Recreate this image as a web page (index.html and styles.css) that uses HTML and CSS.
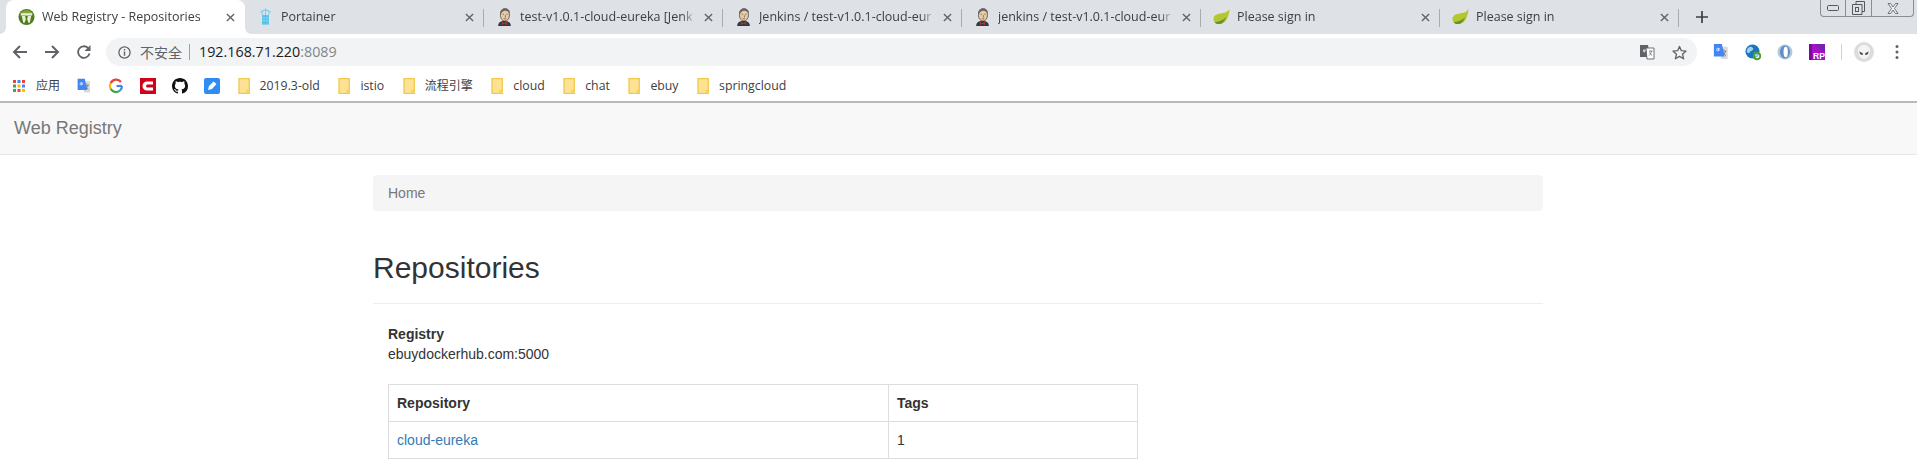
FILE: index.html
```html
<!DOCTYPE html>
<html lang="en">
<head>
<meta charset="UTF-8">
<title>Web Registry - Repositories</title>
<link rel="stylesheet" href="styles.css">
</head>
<body>

<svg class="defs" width="0" height="0">
  <symbol id="close" viewBox="0 0 10 10"><path d="M1 1l8 8M9 1l-8 8" stroke="#5f6368" stroke-width="1.5" fill="none"/></symbol>
  <symbol id="jenkins" viewBox="0 0 18 20">
    <path d="M2 20c0-3.500 2-5.500 7-5.500s7 2 7 5.500z" fill="#2f3a42"/>
    <path d="M4.500 8c0-4.500 2-7 5-7s5 2.500 5 7c0 3.500-2 6.500-5 6.500S4.500 11.500 4.500 8z" fill="#e9c9a6" stroke="#4a403a" stroke-width=".8"/>
    <path d="M4.300 8C3.300 3 6.500.2 9.800.2c3 0 5.700 2.500 5 6.300-1-2.500-2.800-3.500-5-3.500-2.500 0-4.300 2-5.500 5z" fill="#6b6560"/>
    <path d="M7 7h1.500M11 7h1.500M10 8v2.500M8 12h3" stroke="#54453c" stroke-width=".7" fill="none"/>
    <path d="M6 15.500l3 1.300 3-1.300v3.300l-3-1.300-3 1.300z" fill="#b5332a"/>
  </symbol>
  <symbol id="leaf" viewBox="0 0 18 18">
    <path d="M17.500 .5C17 8 14 16.500 6.500 16.500c-3.500 0-6-2.300-6-5.300C.5 5.500 7.500 5.500 12 4.500c2.300-.5 4.300-2 5.500-4z" fill="#b5c72f"/>
    <path d="M1.500 14.500C6 14 10.500 12.500 14 9c-1.500 4-4 7.500-7.500 7.500-2.200 0-3.800-.7-5-2z" fill="#62962c"/>
  </symbol>
  <symbol id="folder" viewBox="0 0 12 16">
    <path d="M1 .7h10.300v14.600H1z" fill="#fde293" stroke="#f2c94c" stroke-width="1.300"/>
    <path d="M9 15v-2.500h2" fill="none" stroke="#f2c94c"/>
  </symbol>
  <symbol id="translate" viewBox="0 0 18 20">
    <path d="M7 4h9.500v14H9z" fill="#d9d9d9"/>
    <path d="M12 7v1M10 9h5M14 9c-.5 2-2 4-3.500 5M11 10c.5 1.500 2 3 3.500 4" stroke="#666" stroke-width=".9" fill="none"/>
    <path d="M1 1h9l3 14H1z" fill="#4285f4"/>
    <path d="M8 6.500H6v1.300h1c-.2.800-1 1-1.500.9C4.500 8.600 4 8 4 7.200S4.700 5.700 5.500 5.800c.5 0 .8.200 1 .4" stroke="#fff" stroke-width=".9" fill="none"/>
  </symbol>
</svg>

<div class="tabstrip">
  <div class="tab active">
    <svg class="favicon" viewBox="0 0 18 18">
      <circle cx="9" cy="9" r="8.500" fill="#4e7d1c"/>
      <path d="M2 6a8 8 0 0 1 14 0z" fill="#84a83c"/>
      <path d="M3 5h12v2.500H3z" fill="#e9efd8"/>
      <path d="M4 8h3.500l.8 3.500L7 15H5.500zM14 8h-3.500l-.8 3.500L11 15h1.500z" fill="#e9efd8"/>
    </svg>
    <span class="tab-title">Web Registry - Repositories</span>
    <svg class="tab-close"><use href="#close"/></svg>
  </div>
  <div class="tab">
    <svg class="favicon" viewBox="0 0 18 18">
      <path d="M5.500 7h7v10h-7z" fill="#3bbced"/>
      <path d="M9 0v7M3.500 4L9 1l5.500 3M5.500 7V4M12.500 7V4" stroke="#6fd0f0" stroke-width="1.100" fill="none"/>
      <path d="M7.500 7v10M10.500 7v10M5.500 10h7M5.500 13h7" stroke="#a5e3f7" stroke-width=".6"/>
    </svg>
    <span class="tab-title">Portainer</span>
    <svg class="tab-close"><use href="#close"/></svg>
  </div>
  <div class="tab">
    <svg class="favicon"><use href="#jenkins"/></svg>
    <span class="tab-title">test-v1.0.1-cloud-eureka [Jenk</span>
    <svg class="tab-close"><use href="#close"/></svg>
  </div>
  <div class="tab">
    <svg class="favicon"><use href="#jenkins"/></svg>
    <span class="tab-title">Jenkins / test-v1.0.1-cloud-eur</span>
    <svg class="tab-close"><use href="#close"/></svg>
  </div>
  <div class="tab">
    <svg class="favicon"><use href="#jenkins"/></svg>
    <span class="tab-title">jenkins / test-v1.0.1-cloud-eur</span>
    <svg class="tab-close"><use href="#close"/></svg>
  </div>
  <div class="tab">
    <svg class="favicon"><use href="#leaf"/></svg>
    <span class="tab-title">Please sign in</span>
    <svg class="tab-close"><use href="#close"/></svg>
  </div>
  <div class="tab">
    <svg class="favicon"><use href="#leaf"/></svg>
    <span class="tab-title">Please sign in</span>
    <svg class="tab-close"><use href="#close"/></svg>
  </div>
  <svg class="new-tab" viewBox="0 0 12 12"><path d="M6 0v12M0 6h12" stroke="#3c4043" stroke-width="1.700"/></svg>

  <div class="window-controls">
    <div class="win-btn win-min"><svg width="12" height="6" viewBox="0 0 12 6"><rect x=".5" y=".5" width="11" height="5" rx="1" fill="none" stroke="#55585c"/></svg></div>
    <div class="win-btn win-max"><svg width="13" height="14" viewBox="0 0 13 14"><path d="M4 3V.5h8.500v10H10M.5 3.500H10v10H.500z" fill="none" stroke="#55585c"/><rect x="3.500" y="6.500" width="3" height="4" fill="none" stroke="#55585c"/></svg></div>
    <div class="win-btn win-x"><svg width="12" height="11" viewBox="0 0 12 11"><path d="M1 .5h2.500L6 4l2.500-3.500H11L7.500 5.500 11 10.500H8.500L6 7l-2.500 3.500H1l3.500-5z" fill="#f2f3f5" stroke="#55585c" stroke-width=".8"/></svg></div>
  </div>
</div>

<div class="toolbar">
  <svg class="nav-btn" viewBox="0 0 16 16"><path d="M15 8H2M8 2L2 8l6 6" fill="none" stroke="#5f6368" stroke-width="2"/></svg>
  <svg class="nav-btn" viewBox="0 0 16 16"><path d="M1 8h13M8 2l6 6-6 6" fill="none" stroke="#5f6368" stroke-width="2"/></svg>
  <svg class="nav-btn" viewBox="0 0 16 16"><path d="M13.500 9.500A5.800 5.800 0 1 1 12 4" fill="none" stroke="#5f6368" stroke-width="1.800"/><path d="M14.500 1v6h-6z" fill="#5f6368"/></svg>

  <div class="omnibox">
    <svg class="info" viewBox="0 0 14 14"><circle cx="7" cy="7" r="6" fill="none" stroke="#5f6368" stroke-width="1.400"/><path d="M7 6v4.500M7 3.300v1.500" stroke="#5f6368" stroke-width="1.500"/></svg>
    <span class="insecure">不安全</span>
    <span class="omni-sep"></span>
    <span class="url">192.168.71.220<span class="url-port">:8089</span></span>
    <svg class="omni-translate" viewBox="0 0 16 16">
      <path d="M1 1h8l2 12H1z" fill="#5f6368"/><path d="M7 4h8v11H8z" fill="#fff" stroke="#5f6368" stroke-width=".9"/>
      <path d="M7 6H4.500v1.200H6c-.2.700-.6 1-1.300.8" stroke="#fff" stroke-width=".8" fill="none"/>
      <path d="M10 7h3.500M12.500 7c-.4 2-1.300 3.500-2.500 4.500M10.500 8.500c.5 1 1.500 2.200 2.700 3" stroke="#5f6368" stroke-width=".8" fill="none"/>
    </svg>
    <svg class="star" viewBox="0 0 16 16"><path d="M8 1.500l2 4.600 5 .4-3.800 3.300 1.200 4.900L8 12.100l-4.400 2.600 1.200-4.900L1 6.500l5-.4z" fill="none" stroke="#5f6368" stroke-width="1.400" stroke-linejoin="round"/></svg>
  </div>

  <div class="extensions">
    <svg class="ext"><use href="#translate"/></svg>
    <svg class="ext" viewBox="0 0 16 16"><circle cx="7.500" cy="7.500" r="7" fill="#1c75bc"/><path d="M3 4c2-2 4-1 5 0s-1 3-2 3-1 3-3 2-1-4 0-5zM9 9c1-1 3-1 4 0s-1 4-2 4-3-3-2-4z" fill="#9fd0ee"/><circle cx="12" cy="12" r="3.300" fill="none" stroke="#4f9e26" stroke-width="2"/></svg>
    <svg class="ext" viewBox="0 0 16 16"><circle cx="8" cy="8" r="7.500" fill="#b4c8dc"/><ellipse cx="8" cy="8" rx="5" ry="6.500" fill="#5f8fc2"/><ellipse cx="8.700" cy="8" rx="2.200" ry="5.300" fill="#fff"/></svg>
    <svg class="ext" viewBox="0 0 16 16"><path d="M0 0h16v16H0z" fill="#a512c8"/><path d="M5 0h11v9z" fill="#7d1fb0"/><path d="M0 0h3v16H0z" fill="#7a0a9c"/><text class="rp-text" x="4" y="14.500">RP</text></svg>
    <span class="ext-sep"></span>
    <svg class="avatar" viewBox="0 0 20 20"><circle cx="10" cy="10" r="10" fill="#dcdcdc"/><path d="M10 3c4 0 6 3 6 6 0 4-3 8-6 8s-6-4-6-8c0-3 2-6 6-6z" fill="#f4f4f4"/><path d="M5.500 9.500l3.500 2-.5 1.500c-2 0-3-1.500-3-3.500zM14.500 9.500l-3.500 2 .5 1.500c2 0 3-1.500 3-3.500z" fill="#444"/></svg>
    <svg class="menu-dots" viewBox="0 0 4 16"><circle cx="2" cy="2.500" r="1.500" fill="#5f6368"/><circle cx="2" cy="8" r="1.500" fill="#5f6368"/><circle cx="2" cy="13.500" r="1.500" fill="#5f6368"/></svg>
  </div>
</div>

<div class="bookmarks">
  <div class="bm bm-apps">
    <svg class="apps" viewBox="0 0 12 12">
      <rect width="3" height="3" fill="#ea4335"/><rect x="4.500" width="3" height="3" fill="#4285f4"/><rect x="9" width="3" height="3" fill="#ea4335"/>
      <rect y="4.500" width="3" height="3" fill="#34a853"/><rect x="4.500" y="4.500" width="3" height="3" fill="#fbbc05"/><rect x="9" y="4.500" width="3" height="3" fill="#4285f4"/>
      <rect y="9" width="3" height="3" fill="#34a853"/><rect x="4.500" y="9" width="3" height="3" fill="#ea4335"/><rect x="9" y="9" width="3" height="3" fill="#fbbc05"/>
    </svg>
    <span class="bm-cjk">应用</span>
  </div>
  <div class="bm-icons">
    <svg class="bm-icon"><use href="#translate"/></svg>
    <svg class="bm-icon" viewBox="0 0 16 16"><path d="M14 8H8.500" fill="none" stroke="#4285f4" stroke-width="2.200"/><path d="M13 4A6 6 0 0 0 2.700 5.200" fill="none" stroke="#ea4335" stroke-width="2.200"/><path d="M2.700 5.200a6 6 0 0 0 0 5.600" fill="none" stroke="#fbbc05" stroke-width="2.200"/><path d="M2.700 10.800A6 6 0 0 0 12 12.500" fill="none" stroke="#34a853" stroke-width="2.200"/><path d="M12 12.500A6 6 0 0 0 14 8" fill="none" stroke="#4285f4" stroke-width="2.200"/></svg>
    <svg class="bm-icon" viewBox="0 0 16 16"><rect width="16" height="16" fill="#d0021b"/><path d="M13 3.500H7a4.500 4.500 0 0 0 0 9h6v-3H7.500a1.500 1.500 0 0 1 0-3H13z" fill="#fff"/></svg>
    <svg class="bm-icon" viewBox="0 0 16 16"><path fill="#111" d="M8 0C3.580 0 0 3.580 0 8c0 3.540 2.290 6.530 5.470 7.590.4.070.55-.17.55-.38 0-.19-.01-.82-.01-1.490-2.010.37-2.530-.49-2.690-.94-.09-.23-.48-.94-.82-1.130-.28-.15-.68-.52-.01-.53.63-.01 1.08.58 1.230.82.72 1.210 1.870.87 2.330.66.070-.52.280-.87.510-1.070-1.780-.2-3.640-.89-3.640-3.950 0-.87.310-1.590.820-2.150-.08-.2-.36-1.020.08-2.120 0 0 .67-.21 2.200.82.640-.18 1.320-.27 2-.27s1.360.09 2 .27c1.530-1.040 2.200-.82 2.200-.82.440 1.100.160 1.920.080 2.120.51.560.820 1.270.820 2.150 0 3.070-1.870 3.750-3.650 3.950.29.250.54.730.54 1.480 0 1.070-.01 1.930-.01 2.200 0 .21.150.46.550.38A8.010 8.010 0 0 0 16 8c0-4.420-3.580-8-8-8z"/></svg>
    <svg class="bm-icon" viewBox="0 0 16 16"><rect width="16" height="16" rx="2" fill="#2f8cf5"/><path d="M4 12l1-4 4.500-4.500 3 2.500L8 11z" fill="#fff"/></svg>
  </div>
  <div class="bm"><svg class="folder"><use href="#folder"/></svg><span>2019.3-old</span></div>
  <div class="bm"><svg class="folder"><use href="#folder"/></svg><span>istio</span></div>
  <div class="bm"><svg class="folder"><use href="#folder"/></svg><span class="bm-cjk">流程引擎</span></div>
  <div class="bm"><svg class="folder"><use href="#folder"/></svg><span>cloud</span></div>
  <div class="bm"><svg class="folder"><use href="#folder"/></svg><span>chat</span></div>
  <div class="bm"><svg class="folder"><use href="#folder"/></svg><span>ebuy</span></div>
  <div class="bm"><svg class="folder"><use href="#folder"/></svg><span>springcloud</span></div>
</div>

<nav class="navbar">
  <a class="brand" href="#">Web Registry</a>
</nav>

<div class="container">
  <div class="breadcrumb"><a href="#">Home</a></div>
  <div class="page-header"><h1>Repositories</h1></div>
  <div class="content">
    <p class="registry"><strong>Registry</strong><br>ebuydockerhub.com:5000</p>
    <table class="repo-table">
      <tr><th class="col-name">Repository</th><th>Tags</th></tr>
      <tr><td><a href="#">cloud-eureka</a></td><td>1</td></tr>
    </table>
  </div>
</div>

</body>
</html>
```

FILE: styles.css
```css
body {
    margin: 0;
    font-family: "Liberation Sans", Arial, sans-serif;
    font-size: 14px;
    line-height: 20px;
    color: #333;
    background-color: #fff;
    overflow: hidden;
}

.defs {
    position: absolute;
}

/* browser tabs */
.tabstrip {
    position: relative;
    display: flex;
    align-items: center;
    height: 34px;
    padding-left: 6px;
    background-color: #dee1e6;
    font-family: "Open Sans", "Noto Sans CJK SC", sans-serif;
    font-size: 12.5px;
    color: #3c4043;
}

.tab {
    display: flex;
    align-items: center;
    box-sizing: border-box;
    width: 239px;
    height: 34px;
    padding: 0 10.5px 0 12px;
    position: relative;
}

.tab::after {
    content: "";
    position: absolute;
    right: 0;
    top: 9px;
    height: 18px;
    width: 1px;
    background-color: #a8abb0;
}

.tab.active {
    background-color: #fff;
    border-radius: 8px 8px 0 0;
}

/* the flared bottom corners of the open tab */
.tab.active::before,
.tab.active::after {
    content: "";
    position: absolute;
    top: auto;
    bottom: 0;
    width: 6px;
    height: 6px;
    background-color: transparent;
}

.tab.active::before {
    left: -6px;
    background-image: radial-gradient(circle at 0 0, transparent 5.5px, #fff 6px);
}

.tab.active::after {
    right: -6px;
    background-image: radial-gradient(circle at 100% 0, transparent 5.5px, #fff 6px);
}

.favicon {
    width: 17px;
    height: 18px;
    flex-shrink: 0;
}

.tab-title {
    flex: 1;
    margin-left: 7px;
    margin-right: 8px;
    overflow: hidden;
    white-space: nowrap;
    -webkit-mask-image: linear-gradient(to left, transparent 0, #000 14px);
    mask-image: linear-gradient(to left, transparent 0, #000 14px);
}

.tab-close {
    width: 9px;
    height: 9px;
    flex-shrink: 0;
}

.new-tab {
    width: 12px;
    height: 12px;
    margin-left: 17px;
}

.window-controls {
    position: absolute;
    top: 0;
    right: 3px;
    display: flex;
    height: 16px;
    border: 1px solid #8a8d91;
    border-top: 0;
    border-radius: 0 0 4px 4px;
}

.win-btn {
    display: flex;
    align-items: center;
    justify-content: center;
    border-right: 1px solid #8a8d91;
}

.win-min { width: 24px; }
.win-max { width: 25px; }
.win-x { width: 41px; border-right: 0; }

/* address bar */
.toolbar {
    display: flex;
    align-items: center;
    height: 36px;
    padding: 0 0 0 12px;
    box-sizing: border-box;
    background-color: #fff;
}

.nav-btn {
    width: 16px;
    height: 16px;
    margin-right: 16px;
    flex-shrink: 0;
}

.omnibox {
    display: flex;
    align-items: center;
    flex-shrink: 0;
    box-sizing: border-box;
    width: 1591px;
    height: 28px;
    margin-left: -2px;
    padding: 0 10px 0 12px;
    background-color: #f1f3f4;
    border-radius: 14px;
}

.info {
    width: 13px;
    height: 13px;
    flex-shrink: 0;
}

.insecure {
    margin-left: 9px;
    font-family: "Noto Sans CJK SC", sans-serif;
    font-size: 14px;
    color: #5f6368;
}

.omni-sep {
    width: 1px;
    height: 16px;
    margin: 0 9px 0 7px;
    background-color: #9aa0a6;
}

.url {
    flex: 1;
    font-family: "Open Sans", sans-serif;
    font-size: 14.3px;
    color: #202124;
}

.url-port {
    color: #80868b;
}

.omni-translate {
    width: 16px;
    height: 16px;
    margin-right: 17px;
}

.star {
    width: 15px;
    height: 15px;
}

.extensions {
    display: flex;
    align-items: center;
    margin-left: 16px;
}

.ext {
    width: 16px;
    height: 18px;
    margin-right: 16px;
    flex-shrink: 0;
}

.rp-text {
    font-family: "Liberation Sans", sans-serif;
    font-size: 8.5px;
    font-weight: bold;
    fill: #fff;
}

.ext-sep {
    width: 1px;
    height: 16px;
    margin-right: 12px;
    background-color: #d0d2d5;
}

.avatar {
    width: 20px;
    height: 20px;
    flex-shrink: 0;
}

.menu-dots {
    width: 4px;
    height: 16px;
    margin-left: 21px;
}

/* bookmarks */
.bookmarks {
    display: flex;
    align-items: center;
    gap: 18.5px;
    box-sizing: border-box;
    height: 33px;
    padding-left: 13px;
    background-color: #fff;
    border-bottom: 2px solid #b9b9b9;
    font-family: "Open Sans", "Noto Sans CJK SC", sans-serif;
    font-size: 12.3px;
    color: #3c4043;
}

.bm {
    display: flex;
    align-items: center;
    gap: 10px;
    white-space: nowrap;
}

.bm-cjk {
    font-size: 12px;
}

.bm-apps {
    gap: 11px;
    margin-right: -2.5px;
}

.apps {
    width: 12px;
    height: 12px;
}

.bm-icons {
    display: flex;
    gap: 16px;
    margin-right: -1px;
}

.bm-icon {
    width: 16px;
    height: 16px;
}

.folder {
    width: 12px;
    height: 16px;
}

/* registry page */
.navbar {
    box-sizing: border-box;
    height: 52px;
    padding: 15px 14px;
    background-color: #f8f8f8;
    border-bottom: 1px solid #e7e7e7;
    margin-bottom: 20px;
}

.brand {
    font-size: 18px;
    color: #777;
    text-decoration: none;
}

.container {
    width: 1170px;
    margin-left: 373px;
}

.breadcrumb {
    padding: 8px 15px;
    margin-bottom: 40px;
    background-color: #f5f5f5;
    border-radius: 4px;
}

.breadcrumb a {
    color: #777;
    text-decoration: none;
}

.page-header {
    margin-bottom: 20px;
    padding-bottom: 9px;
    border-bottom: 1px solid #eee;
}

h1 {
    margin: 0 0 10px;
    font-size: 30px;
    font-weight: 500;
    line-height: 33px;
}

.content {
    padding: 0 15px;
}

.registry {
    margin: 0 0 20px;
}

.repo-table {
    width: 750px;
    border-collapse: collapse;
    border: 1px solid #ddd;
}

.repo-table th,
.repo-table td {
    padding: 8px;
    border: 1px solid #ddd;
    text-align: left;
}

.col-name {
    width: 483px;
}

.repo-table a {
    color: #337ab7;
    text-decoration: none;
}
```
